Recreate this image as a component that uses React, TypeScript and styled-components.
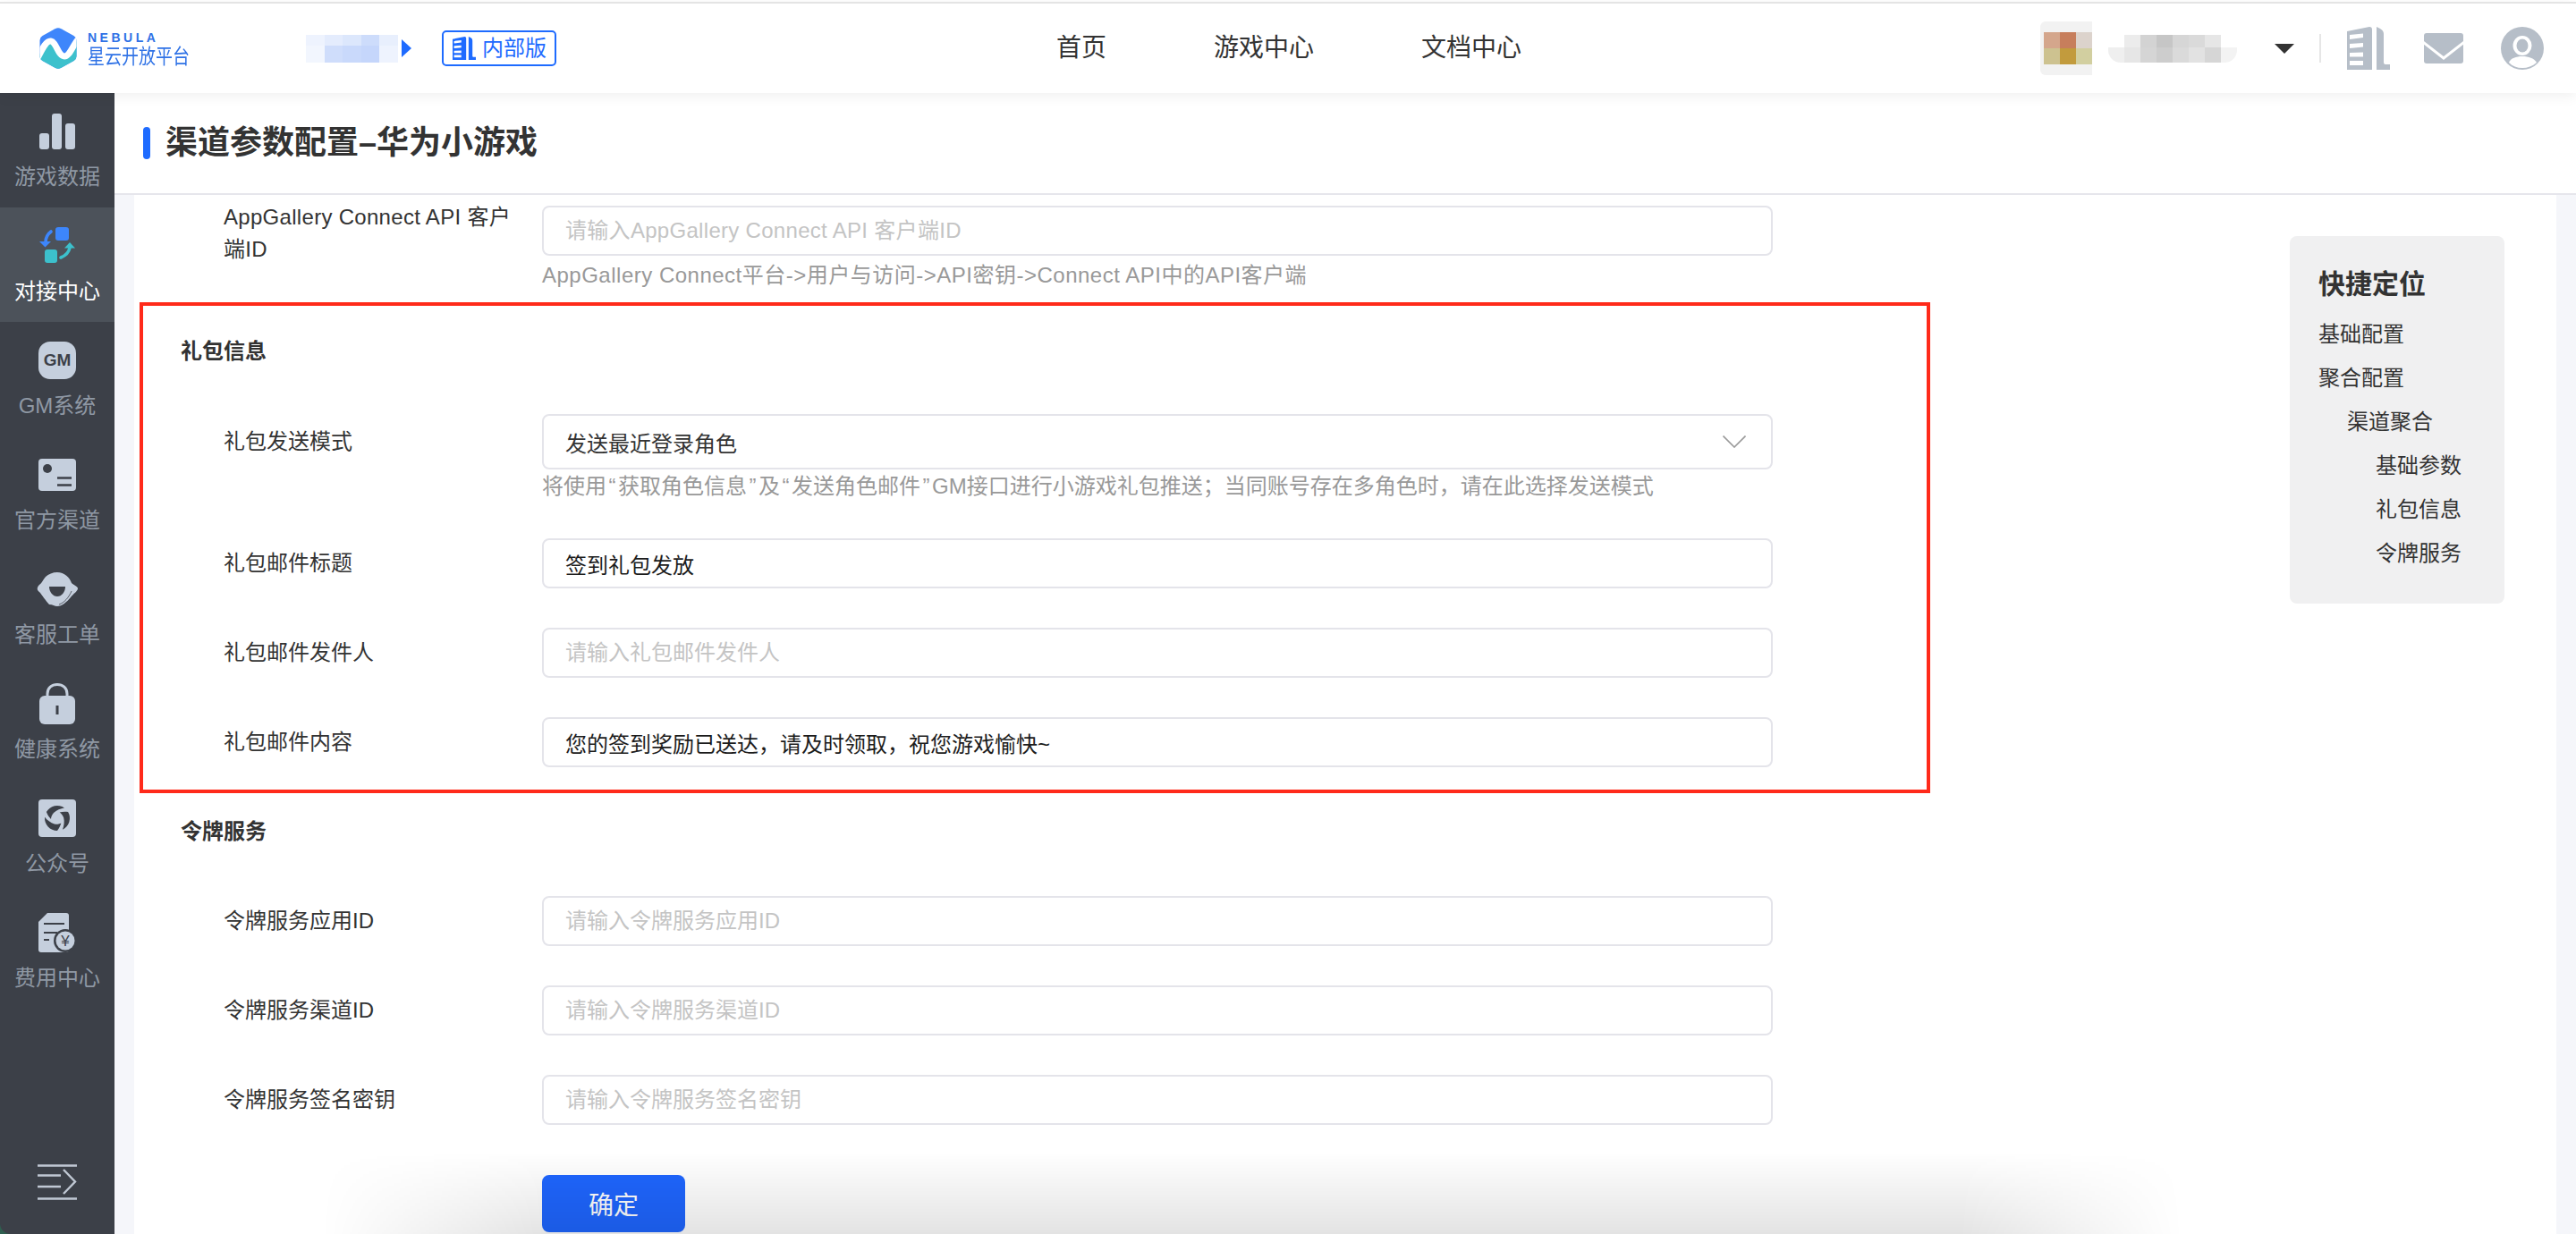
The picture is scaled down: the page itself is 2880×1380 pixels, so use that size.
import styled, { createGlobalStyle } from "styled-components";

const FONT = `"Liberation Sans", "Noto Sans CJK SC", sans-serif`;

const GlobalStyle = createGlobalStyle`
  html, body {
    margin: 0;
    padding: 0;
    background: #fff;
    font-family: ${FONT};
  }
  * {
    box-sizing: border-box;
  }
`;

const crumbBlur = [
  "#eef3fe", "#e4ecfd", "#dce7fc", "#cddcfb", "#e8effd",
  "#f2f6fe", "#cfddfb", "#c9d9fb", "#c5d6fb", "#eef3fe",
];
const avatarBlur = ["#d4a68c", "#c77e5c", "#dcd3cc", "#cdc290", "#c29b3d", "#d2cfa0"];
const nameBlur = [
  "#fff", "#ececec", "#d3d3d3", "#c6c6c6", "#d6d6d6", "#dadada", "#e6e6e6", "#fff",
  "#efefef", "#e6e6e6", "#d5d5d5", "#cdcdcd", "#dadada", "#e2e2e2", "#d6d6d6", "#f3f3f3",
];

const LogoMark = () => (
  <svg width="42" height="46" viewBox="0 0 42 46">
    <defs>
      <clipPath id="hex">
        <path d="M17.5 1.2 Q21 -.6 24.5 1.2 L38.5 9 Q41.5 10.8 41.5 14 L41.5 32 Q41.5 35.2 38.5 37 L24.5 44.8 Q21 46.6 17.5 44.8 L3.5 37 Q.5 35.2 .5 32 L.5 14 Q.5 10.8 3.5 9 Z" />
      </clipPath>
    </defs>
    <g clipPath="url(#hex)">
      <rect width="42" height="46" fill="#3f86fb" />
      <path d="M-2 34 C4 22 8 14 13 15 C19 16 21 32 28 32 C34 32 37 20 44 12 V46 H-2 Z" fill="#3dc1cc" />
      <path d="M-2 34 C4 22 8 14 13 15 C19 16 21 32 28 32 C34 32 37 20 44 12" fill="none" stroke="#fff" strokeWidth="7" />
    </g>
  </svg>
);

const BuildingIcon = ({ width, height }: { width: number; height: number }) => (
  <svg width={width} height={height} viewBox="0 0 48 48" fill="currentColor">
    <path
      fillRule="evenodd"
      d="M0 5 L25 0 Q28 0 28 3 V48 H0 Z M3 9 V14 L18 12 V7.5 Z M3 19 V24 L18 22.5 V18 Z M3 29 V33.5 H18 V28.5 Z M3 38 V43 H18 V38 Z"
    />
    <path d="M33 0 L37 2 Q41 4 41 8 V40 Q41 42 43 42 H48 V48 H33 Z" />
  </svg>
);

const MailIcon = () => (
  <svg width="44" height="34" viewBox="0 0 44 34">
    <rect width="44" height="34" rx="3" fill="#b6bec8" />
    <path d="M-1 10 L22 28 L45 10" fill="none" stroke="#fff" strokeWidth="3" />
  </svg>
);

const UserIcon = () => (
  <svg width="48" height="48" viewBox="0 0 48 48">
    <circle cx="24" cy="24" r="24" fill="#b6bec8" />
    <ellipse cx="24" cy="21" rx="10.5" ry="11" fill="#fff" />
    <ellipse cx="24" cy="21" rx="6.5" ry="7.5" fill="#b6bec8" />
    <path d="M9 40 C11 35 17 33 24 33 C31 33 37 35 40 40 C35 44 30 46 24 46 C18 46 13 44 9 40 Z" fill="#fff" />
  </svg>
);

const ICON = "#c5cfdd";
const DARK = "#3c4048";

const ChartIcon = () => (
  <svg width="40" height="40" viewBox="0 0 40 40" fill={ICON}>
    <rect x="0" y="22" width="11" height="18" rx="3" />
    <rect x="14" y="0" width="11" height="40" rx="3" />
    <rect x="29" y="11" width="11" height="29" rx="3" />
  </svg>
);

const LinkIcon = () => (
  <svg width="42" height="42" viewBox="0 0 42 42">
    <rect x="19" y="0" width="15" height="15" rx="3" fill="#3d86fb" />
    <rect x="7" y="25" width="14" height="15" rx="3" fill="#3cc0cc" />
    <path d="M14 5 C10 8 8 12 8 17" fill="none" stroke="#3d86fb" strokeWidth="3.6" strokeLinecap="round" />
    <path d="M1 16 H14 L7.5 22.5 Z" fill="#3d86fb" />
    <path d="M25 34 C30 32 34 28 35 23" fill="none" stroke="#3cc0cc" strokeWidth="3.6" strokeLinecap="round" />
    <path d="M29 23.5 H41 L35 17 Z" fill="#3cc0cc" />
  </svg>
);

const CardIcon = () => (
  <svg width="42" height="36" viewBox="0 0 42 36">
    <rect width="42" height="36" rx="4" fill={ICON} />
    <circle cx="10" cy="11" r="5" fill={DARK} />
    <path d="M21 21.5 H37 M21 29.5 H37" stroke={DARK} strokeWidth="2.4" />
  </svg>
);

const ServiceIcon = () => (
  <svg width="46" height="38" viewBox="0 0 46 38">
    <path
      d="M23 0 C31 0 37 6 39 12 C41 14 46 16 46 18 C46 21 41 24 38 28 C34 33 28 38 23 38 C20 38 18 36 14 36 C10 32 6 25 3 22 C0 20 0 17 3 14 C6 12 7 8 10 5 C13 2 18 0 23 0 Z"
      fill={ICON}
    />
    <path d="M14 16 H32 C32 22 28 27 23 27 C18 27 14 22 14 16 Z" fill={DARK} />
    <path d="M39 21 C36 28 31 34 25 36" fill="none" stroke={DARK} strokeWidth="0.8" />
  </svg>
);

const LockIcon = () => (
  <svg width="40" height="46" viewBox="0 0 40 46">
    <path d="M9 16 V12 C9 5 14 1.5 20 1.5 C26 1.5 31 5 31 12 V16" fill="none" stroke={ICON} strokeWidth="3" />
    <rect y="14" width="40" height="32" rx="6" fill={ICON} />
    <rect x="18.5" y="25" width="3" height="10" fill={DARK} />
  </svg>
);

const SwirlIcon = () => (
  <svg width="42" height="42" viewBox="0 0 42 42">
    <rect width="42" height="42" rx="4" fill={ICON} />
    {[0, 120, 240].map((deg) => (
      <path
        key={deg}
        d="M8.9 14 A14 14 0 0 1 29 9.5 C25 10 20 12 17 15 C15 17 14 20 14 22 C12 20 10 17 8.9 14 Z"
        fill={DARK}
        transform={`rotate(${deg} 21 21)`}
      />
    ))}
  </svg>
);

const BillIcon = () => (
  <svg width="42" height="44" viewBox="0 0 42 44">
    <path d="M10 0 H31 Q34 0 34 3 V41 Q34 44 31 44 H3 Q0 44 0 41 V10 Z" fill={ICON} />
    <path d="M6 12 H29 M6 22 H21 M6 30 H12" stroke={DARK} strokeWidth="2.2" />
    <circle cx="30" cy="31" r="13" fill={DARK} />
    <circle cx="30" cy="31" r="10.5" fill={ICON} />
    <text x="30" y="37" textAnchor="middle" fontSize="17" fontFamily={FONT} fill={DARK}>
      ¥
    </text>
  </svg>
);

const CollapseIcon = () => (
  <svg width="44" height="40" viewBox="0 0 44 40" fill="none" stroke="#c0c8d4" strokeWidth="2.4">
    <path d="M0 1.5 H44 M0 12.5 H26 M0 25 H26 M0 38.5 H44" />
    <path d="M29 6 L42 19.5 L29 33" />
  </svg>
);

const Page = styled.div`
  position: relative;
  width: 2880px;
  height: 1380px;
  overflow: hidden;
  display: flex;
  flex-direction: column;
  background: #fff;
`;

const Header = styled.header`
  position: relative;
  z-index: 2;
  flex: none;
  height: 102px;
  margin-top: 2px;
  border-top: 2px solid #e4e4e4;
  background: #fff;
  box-shadow: 0 4px 14px rgba(0, 0, 0, 0.06);
  display: flex;
  align-items: center;
  padding: 0 36px 0 44px;
  color: #333;
`;

const Brand = styled.div`
  display: flex;
  align-items: center;
  gap: 12px;
  width: 298px;
`;

const BrandText = styled.div`
  display: flex;
  flex-direction: column;
  margin-top: 3px;
  color: #2f72e6;
`;

const BrandEn = styled.span`
  font-size: 14px;
  line-height: 14px;
  font-weight: 700;
  letter-spacing: 3.5px;
`;

const BrandCn = styled.span`
  font-size: 19px;
  line-height: 24px;
  margin-top: 3px;
  transform: scaleY(1.22);
`;

const Mosaic = styled.div<{ $cols: number; $rows: string; $cell: number }>`
  display: grid;
  grid-template-columns: repeat(${(p) => p.$cols}, ${(p) => p.$cell}px);
  grid-template-rows: ${(p) => p.$rows};
`;

const MosaicCell = styled.span<{ $color: string }>`
  background: ${(p) => p.$color};
`;

const CrumbArrow = styled.span`
  margin-left: 4px;
  width: 0;
  height: 0;
  border-left: 11px solid #1e6bff;
  border-top: 10px solid transparent;
  border-bottom: 10px solid transparent;
`;

const VersionBadge = styled.div`
  margin-left: 34px;
  width: 128px;
  height: 40px;
  border: 2px solid #1e6bff;
  border-radius: 5px;
  display: flex;
  align-items: center;
  gap: 6px;
  padding-left: 9px;
  color: #1e6bff;
  font-size: 24px;
  line-height: 36px;
`;

const MainNav = styled.nav`
  margin-left: 559px;
  display: flex;
  gap: 120px;
  font-size: 28px;
  line-height: 40px;
`;

const UserArea = styled.div`
  margin-left: auto;
  display: flex;
  align-items: center;
  color: #b6bec8;
`;

const AvatarBlur = styled.div`
  width: 58px;
  height: 60px;
  padding: 12px 0 0 4px;
  border-radius: 6px 0 0 6px;
  background: #f2f2f2;
`;

const NameBlur = styled(Mosaic)`
  margin-left: 18px;
  border-radius: 0 0 14px 14px;
  overflow: hidden;
`;

const DownCaret = styled.span`
  margin-left: 42px;
  width: 0;
  height: 0;
  border-top: 11px solid #333;
  border-left: 11px solid transparent;
  border-right: 11px solid transparent;
`;

const VLine = styled.span`
  margin-left: 28px;
  margin-right: 29px;
  width: 2px;
  height: 32px;
  background: #e6e6e6;
`;

const HeadIcon = styled.span<{ $gap?: number }>`
  display: flex;
  margin-left: ${(p) => p.$gap ?? 0}px;
`;

const BodyRow = styled.div`
  flex: 1;
  min-height: 0;
  display: flex;
  background: #2f5f50;
`;

const Sidebar = styled.aside`
  flex: none;
  width: 128px;
  display: flex;
  flex-direction: column;
  padding-bottom: 38px;
  background: #3c4048;
  border-bottom-left-radius: 12px;
`;

const SideItem = styled.div<{ $active?: boolean }>`
  flex: none;
  height: 128px;
  padding-top: 19px;
  display: flex;
  flex-direction: column;
  align-items: center;
  background: ${(p) => (p.$active ? "#4c525a" : "transparent")};
  color: ${(p) => (p.$active ? "#fff" : "#8f98a4")};
`;

const SideIcon = styled.div`
  height: 48px;
  display: flex;
  align-items: center;
  justify-content: center;
`;

const SideLabel = styled.span`
  margin-top: 11px;
  font-size: 24px;
  line-height: 32px;
  white-space: nowrap;
`;

const GmBadge = styled.div`
  width: 42px;
  height: 42px;
  border-radius: 13px;
  background: ${ICON};
  color: ${DARK};
  font-size: 19px;
  font-weight: 700;
  display: flex;
  align-items: center;
  justify-content: center;
`;

const CollapseButton = styled.div`
  margin-top: auto;
  display: flex;
  justify-content: center;
`;

const Main = styled.main`
  flex: 1;
  min-width: 0;
  display: flex;
  flex-direction: column;
  background: #f5f6fa;
`;

const TitleBar = styled.div`
  flex: none;
  height: 114px;
  display: flex;
  align-items: center;
  padding-left: 32px;
  background: #fff;
  border-bottom: 2px solid #e6e6ec;
`;

const TitleMark = styled.span`
  width: 8px;
  height: 36px;
  border-radius: 4px;
  background: #1e6bff;
`;

const PageTitle = styled.h1`
  margin: 0 0 0 17px;
  font-size: 36px;
  line-height: 48px;
  font-weight: 700;
  color: #333;
`;

const Card = styled.div`
  flex: 1;
  min-height: 0;
  margin: 0 22px;
  background: #fff;
  display: flex;
  overflow: hidden;
`;

const FormColumn = styled.div`
  flex: none;
  width: 2008px;
  padding: 12px 0 0 6px;
`;

const Row = styled.div<{ $top?: number }>`
  display: flex;
  align-items: center;
  margin-top: ${(p) => p.$top ?? 0}px;
  padding-left: 94px;
`;

const WrapRow = styled(Row)`
  align-items: flex-start;
`;

const FieldLabel = styled.label<{ $wrapped?: boolean }>`
  flex: none;
  width: 356px;
  padding-right: 22px;
  margin: ${(p) => (p.$wrapped ? "-5px 0 -11px" : "0")};
  letter-spacing: ${(p) => (p.$wrapped ? "0.3px" : "0")};
  font-size: 24px;
  line-height: 36px;
  color: #333;
`;

const TextInput = styled.input`
  flex: none;
  display: block;
  width: 1376px;
  height: 56px;
  padding: 0 24px;
  border: 2px solid #e4e4ea;
  border-radius: 8px;
  outline: none;
  background: #fff;
  font-family: ${FONT};
  font-size: 24px;
  color: #1c1c1c;
  &::placeholder {
    color: #c4c4c4;
  }
`;

const LatinInput = styled(TextInput)`
  letter-spacing: 0.3px;
`;

const SelectBox = styled.div`
  flex: none;
  width: 1376px;
  height: 62px;
  padding: 0 28px 0 24px;
  border: 2px solid #e4e4ea;
  border-radius: 8px;
  display: flex;
  align-items: center;
  justify-content: space-between;
  font-size: 24px;
  color: #333;
`;

const Hint = styled.div<{ $top: number; $spacing?: number }>`
  margin: ${(p) => p.$top}px 0 0 450px;
  font-size: 24px;
  line-height: 36px;
  letter-spacing: ${(p) => p.$spacing ?? 0}px;
  color: #999;
  white-space: nowrap;
`;

const Quote = styled.span`
  padding: 0 2.5px;
`;

const Highlight = styled.section`
  height: 549px;
  margin-top: 12px;
  padding: 33px 0 0;
  border: 4px solid #ff2a1a;
`;

const SectionTitle = styled.h3<{ $left?: number; $top?: number }>`
  margin: ${(p) => p.$top ?? 0}px 0 0 ${(p) => p.$left ?? 42}px;
  font-size: 24px;
  line-height: 36px;
  font-weight: 700;
  color: #333;
`;

const InnerRow = styled(Row)`
  padding-left: 90px;
`;

const InnerHint = styled(Hint)`
  margin-left: 446px;
`;

const ConfirmButton = styled.button`
  display: block;
  margin: 56px 0 0 450px;
  width: 160px;
  height: 64px;
  border: 0;
  border-radius: 8px;
  background: #1f66ff;
  color: #fff;
  font-family: ${FONT};
  font-size: 28px;
`;

const Anchor = styled.div`
  flex: none;
  align-self: flex-start;
  width: 240px;
  height: 411px;
  margin: 46px 0 0 402px;
  padding: 32px 0 0 32px;
  border-radius: 8px;
  background: #f0f0f1;
  color: #333;
`;

const AnchorTitle = styled.div`
  font-size: 30px;
  line-height: 44px;
  font-weight: 700;
`;

const AnchorList = styled.div`
  margin-top: 9px;
`;

const AnchorLink = styled.div<{ $level: number }>`
  padding-left: ${(p) => p.$level * 32}px;
  font-size: 24px;
  line-height: 49px;
`;

const WindowShadow = styled.div`
  position: absolute;
  left: 360px;
  right: 440px;
  bottom: 0;
  height: 92px;
  pointer-events: none;
  background: linear-gradient(to top, rgba(0, 0, 0, 0.11), rgba(0, 0, 0, 0));
  mask-image: linear-gradient(to right, transparent, #000 12%, #000 88%, transparent);
`;

const sideItems = [
  { label: "游戏数据", icon: <ChartIcon /> },
  { label: "对接中心", icon: <LinkIcon />, active: true },
  { label: "GM系统", icon: <GmBadge>GM</GmBadge> },
  { label: "官方渠道", icon: <CardIcon /> },
  { label: "客服工单", icon: <ServiceIcon /> },
  { label: "健康系统", icon: <LockIcon /> },
  { label: "公众号", icon: <SwirlIcon /> },
  { label: "费用中心", icon: <BillIcon /> },
];

const anchors = [
  { label: "基础配置", level: 0 },
  { label: "聚合配置", level: 0 },
  { label: "渠道聚合", level: 1 },
  { label: "基础参数", level: 2 },
  { label: "礼包信息", level: 2 },
  { label: "令牌服务", level: 2 },
];

const tokenFields = ["令牌服务应用ID", "令牌服务渠道ID", "令牌服务签名密钥"];

export default function App() {
  return (
    <Page>
      <GlobalStyle />
      <Header>
        <Brand>
          <LogoMark />
          <BrandText>
            <BrandEn>NEBULA</BrandEn>
            <BrandCn>星云开放平台</BrandCn>
          </BrandText>
        </Brand>
        <Mosaic $cols={5} $rows="12px 19px" $cell={20.6}>
          {crumbBlur.map((c, i) => (
            <MosaicCell key={i} $color={c} />
          ))}
        </Mosaic>
        <CrumbArrow />
        <VersionBadge>
          <BuildingIcon width={28} height={26} />
          内部版
        </VersionBadge>
        <MainNav>
          <span>首页</span>
          <span>游戏中心</span>
          <span>文档中心</span>
        </MainNav>
        <UserArea>
          <AvatarBlur>
            <Mosaic $cols={3} $rows="18px 18px" $cell={18}>
              {avatarBlur.map((c, i) => (
                <MosaicCell key={i} $color={c} />
              ))}
            </Mosaic>
          </AvatarBlur>
          <NameBlur $cols={8} $rows="14px 17px" $cell={18}>
            {nameBlur.map((c, i) => (
              <MosaicCell key={i} $color={c} />
            ))}
          </NameBlur>
          <DownCaret />
          <VLine />
          <HeadIcon>
            <BuildingIcon width={48} height={48} />
          </HeadIcon>
          <HeadIcon $gap={38}>
            <MailIcon />
          </HeadIcon>
          <HeadIcon $gap={42}>
            <UserIcon />
          </HeadIcon>
        </UserArea>
      </Header>
      <BodyRow>
        <Sidebar>
          {sideItems.map((item) => (
            <SideItem key={item.label} $active={item.active}>
              <SideIcon>{item.icon}</SideIcon>
              <SideLabel>{item.label}</SideLabel>
            </SideItem>
          ))}
          <CollapseButton>
            <CollapseIcon />
          </CollapseButton>
        </Sidebar>
        <Main>
          <TitleBar>
            <TitleMark />
            <PageTitle>渠道参数配置–华为小游戏</PageTitle>
          </TitleBar>
          <Card>
            <FormColumn>
              <WrapRow>
                <FieldLabel $wrapped>AppGallery Connect API 客户端ID</FieldLabel>
                <LatinInput placeholder="请输入AppGallery Connect API 客户端ID" />
              </WrapRow>
              <Hint $top={4} $spacing={0.5}>
                AppGallery Connect平台-&gt;用户与访问-&gt;API密钥-&gt;Connect API中的API客户端
              </Hint>
              <Highlight>
                <SectionTitle>礼包信息</SectionTitle>
                <InnerRow $top={52}>
                  <FieldLabel>礼包发送模式</FieldLabel>
                  <SelectBox>
                    发送最近登录角色
                    <svg width="26" height="14" viewBox="0 0 26 14" fill="none" stroke="#999" strokeWidth="1.6">
                      <path d="M0.5 0.5 L13 13 L25.5 0.5" />
                    </svg>
                  </SelectBox>
                </InnerRow>
                <InnerHint $top={1}>
                  将使用<Quote>“</Quote>获取角色信息<Quote>”</Quote>及<Quote>“</Quote>发送角色邮件<Quote>”</Quote>
                  GM接口进行小游戏礼包推送；当同账号存在多角色时，请在此选择发送模式
                </InnerHint>
                <InnerRow $top={40}>
                  <FieldLabel>礼包邮件标题</FieldLabel>
                  <TextInput readOnly value="签到礼包发放" />
                </InnerRow>
                <InnerRow $top={44}>
                  <FieldLabel>礼包邮件发件人</FieldLabel>
                  <TextInput placeholder="请输入礼包邮件发件人" />
                </InnerRow>
                <InnerRow $top={44}>
                  <FieldLabel>礼包邮件内容</FieldLabel>
                  <TextInput readOnly value="您的签到奖励已送达，请及时领取，祝您游戏愉快~" />
                </InnerRow>
              </Highlight>
              <SectionTitle $left={46} $top={25}>
                令牌服务
              </SectionTitle>
              {tokenFields.map((name, i) => (
                <Row key={name} $top={i === 0 ? 54 : 44}>
                  <FieldLabel>{name}</FieldLabel>
                  <TextInput placeholder={`请输入${name}`} />
                </Row>
              ))}
              <ConfirmButton>确定</ConfirmButton>
            </FormColumn>
            <Anchor>
              <AnchorTitle>快捷定位</AnchorTitle>
              <AnchorList>
                {anchors.map((a) => (
                  <AnchorLink key={a.label} $level={a.level}>
                    {a.label}
                  </AnchorLink>
                ))}
              </AnchorList>
            </Anchor>
          </Card>
        </Main>
      </BodyRow>
      <WindowShadow />
    </Page>
  );
}
